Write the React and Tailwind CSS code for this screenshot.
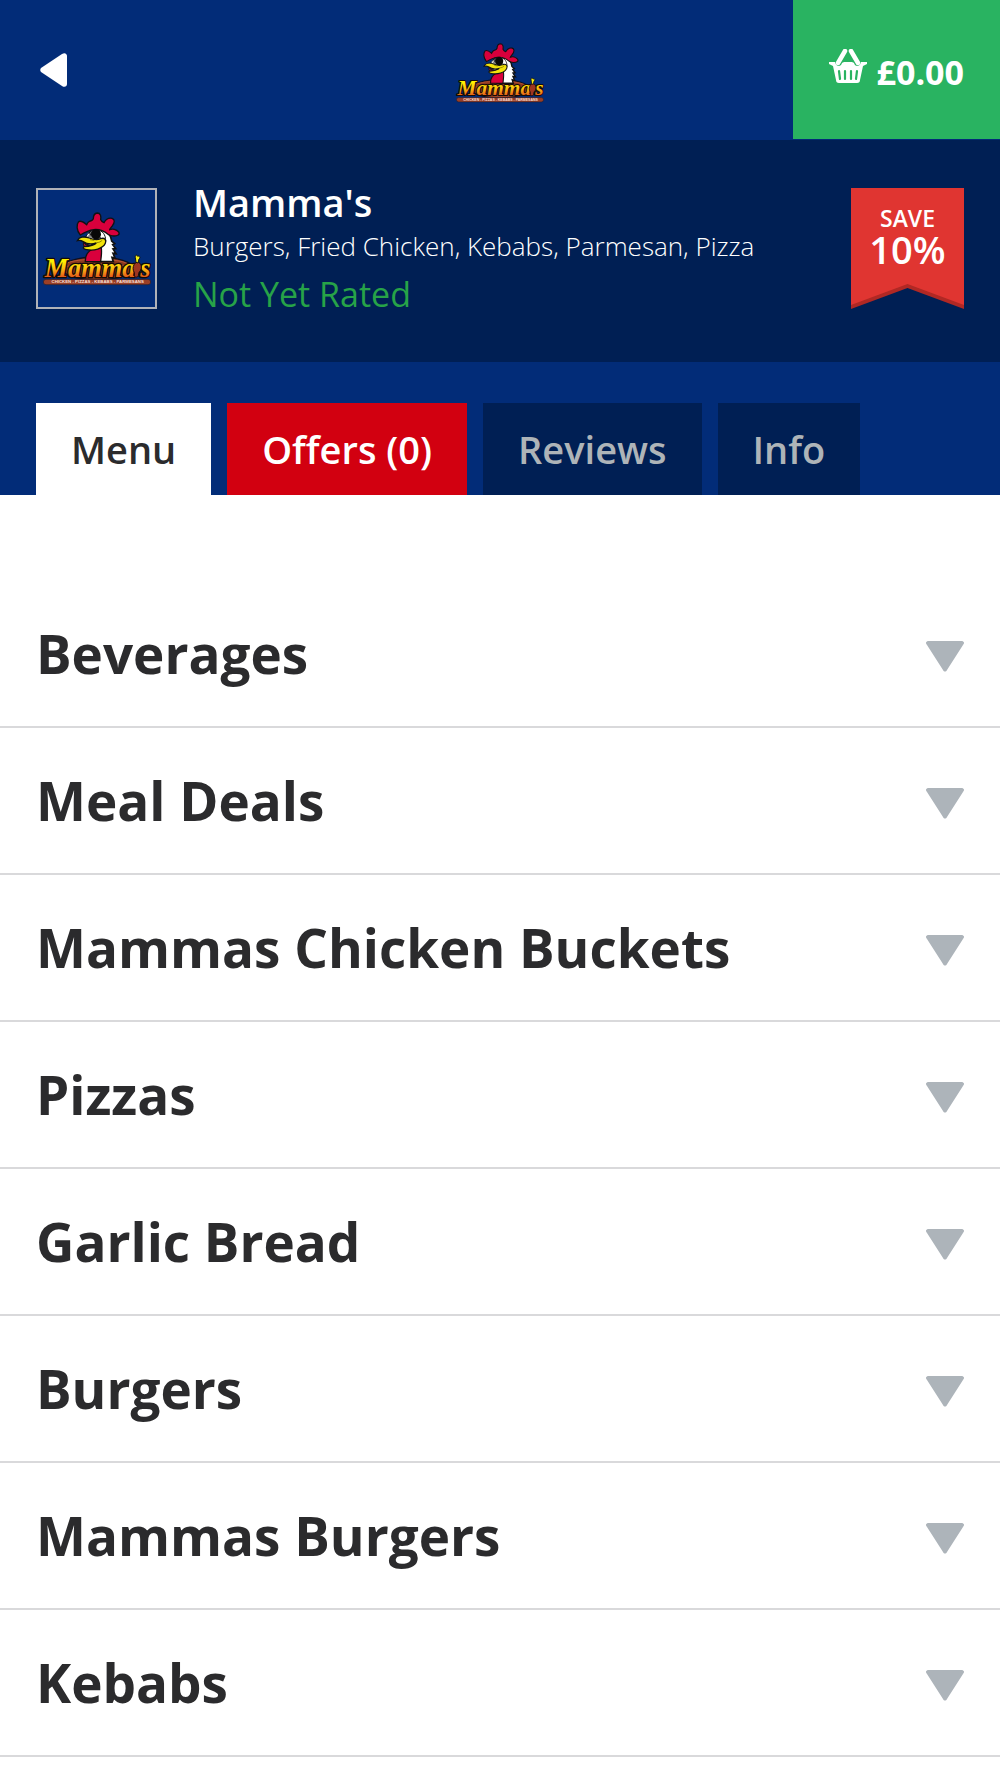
import React, { useId, useState } from 'react';

const categories = [
    'Beverages',
    'Meal Deals',
    'Mammas Chicken Buckets',
    'Pizzas',
    'Garlic Bread',
    'Burgers',
    'Mammas Burgers',
    'Kebabs',
];

const tabs = [
    { name: 'Menu', style: 'bg-white text-[#2b2b2d]' },
    { name: 'Offers (0)', style: 'bg-[#d20010] text-white' },
    { name: 'Reviews', style: 'bg-[#001f54] text-[#aeb4b8]' },
    { name: 'Info', style: 'bg-[#001f54] text-[#aeb4b8]' },
];

const Logo = ({ className }) => {
    const fill = useId();

    return (
        <svg viewBox="36 97 330 222" className={className} role="img" aria-label="Mamma's">
            <defs>
                <linearGradient id={fill} x1="0" y1="228" x2="0" y2="294" gradientUnits="userSpaceOnUse">
                    <stop offset="0.25" stopColor="#fff200" />
                    <stop offset="0.6" stopColor="#fbb812" />
                    <stop offset="1" stopColor="#e2501a" />
                </linearGradient>
            </defs>

            {/* Wooden sign */}
            <ellipse cx="202" cy="266" rx="108" ry="34" fill="#8a3820" stroke="#0a1024" strokeWidth="4" />
            <path d="M112 250c25-14 150-16 180 2M106 262c30-12 160-12 192 0M130 286c40 10 110 10 146 0" fill="none" stroke="#b95532" strokeWidth="3" />

            {/* Rooster */}
            <path d="M216 150c20 6 28 22 29 34l9 8-6 3 9 12-8 1 9 14-9-1 6 14-9-2 4 13h-60l4-44z" fill="#fff" stroke="#111" strokeWidth="5" />
            <path d="M166 246c-1-18 6-30 22-38l25-8c4 16 0 32-1 46z" fill="#d9003c" stroke="#111" strokeWidth="4" />
            <path d="M151 166c-12-14-12-32-5-40 8-5 18 4 24 9 2-5 4-8 8-10 9-2 11-4 12-8 0-9 4-16 12-17 9 0 12 9 10 20 3 6 6 8 10 9 5-9 14-15 24-13 9 3 9 13 0 24-5 6-7 8-7 10 8-4 20-1 27 7 5 8-4 12-14 12-8 0-13-3-18-5-12-10-26-16-43-14-16 2-30 10-40 16z" fill="#d9003c" stroke="#111" strokeWidth="4" />
            <path d="M166 176c5-17 20-26 36-25 16 2 25 14 25 32l-20 20-40-10z" fill="#fff" stroke="#111" strokeWidth="3" />
            <path d="M172 172c6-10 14-15 22-15l-8 18z" fill="#888" />
            <ellipse cx="198" cy="164" rx="15" ry="16" fill="#080808" />
            <path d="M181 151l5 12-9-6 6 11M181 176c10 6 24 5 31-4" fill="none" stroke="#111" strokeWidth="3" />
            <path d="M160 188c9 12 24 14 38 7l-24 14c-9-3-15-10-14-21z" fill="#b5102e" stroke="#111" strokeWidth="3" />
            <path d="M142 183c5-11 20-14 36-8 12 5 23 7 34 2 12-4 18 4 14 14-6 15-34 25-60 18-7-2-8-6-3-8 15-1 28-3 36-11-17 6-32 1-41-5-6-4-12-3-16-2z" fill="#f2e30b" stroke="#111" strokeWidth="4" />
            <path d="M180 180l13 2M199 189c8 0 14-3 18-8" fill="none" stroke="#8d8200" strokeWidth="3" />

            {/* Lettering */}
            <g
                fontFamily="Liberation Serif, serif"
                fontWeight="bold"
                fontStyle="italic"
                fill={`url(#${fill})`}
                stroke="#140a05"
                strokeWidth="8"
                strokeLinejoin="round"
                paintOrder="stroke"
            >
                <text x="44" y="291" fontSize="79">Mamma</text>
                <text x="331" y="291" fontSize="79">s</text>
            </g>
            <path d="M316 250c-6 6-8 14-6 22l3 7v9c2 6 10 6 12 0l2-10c6-5 9-15 6-22-3-8-11-11-17-6z" fill="#9e3520" stroke="#1a0906" strokeWidth="3" />
            <path d="M316 234c-2-8 6-10 7-4 7-3 9 5 4 8l-3 12-6-2z" fill="#f6ef15" stroke="#111" strokeWidth="3" />

            {/* Tagline */}
            <rect x="40" y="299" width="322" height="16" rx="8" fill="#9a3f27" stroke="#2a1c26" strokeWidth="2" />
            <text x="203" y="311" textAnchor="middle" fontFamily="Liberation Sans, sans-serif" fontWeight="bold" fontSize="13" fill="#f6dfd6">
                CHICKEN - PIZZAS - KEBABS - PARMESANS
            </text>
        </svg>
    );
};

const BasketIcon = () => (
    <svg viewBox="0 0 38 34" className="h-[34px] w-[38px]" fill="none" aria-hidden="true">
        <path d="M16 2 9 14M22 2l7 12" stroke="#fff" strokeWidth="4.500" strokeLinecap="round" />
        <path d="M0 13h6c1 5 6 5 7 1 1-1 2-1 3-1h6c1 0 2 0 3 1 1 4 6 4 7-1h6v2l-4 2-3 14c0 2-1 3-3 3H10c-2 0-3-1-3-3L4 17l-4-2z" fill="#fff" />
        <path d="m10 22 1 8M16 22v8M22 22v8M28 22l-1 8" stroke="#29b361" strokeWidth="2.200" strokeLinecap="round" />
    </svg>
);

const CategoryRow = ({ name }) => (
    <li className="border-b-2 border-[#d9d9db]">
        <button type="button" className="flex h-[145px] w-full items-center justify-between px-9">
            <span className="text-[53px] leading-[72px] font-bold">{name}</span>
            <svg viewBox="0 0 38 32" className="mt-1 h-8 w-[38px]" aria-hidden="true">
                <path d="M3 1h32c3 0 4 2 2 4L21 30c-1 2-3 2-4 0L1 5C-1 3 0 1 3 1z" fill="#adb4ba" />
            </svg>
        </button>
    </li>
);

const App = () => {
    const [active, setActive] = useState('Menu');

    return (
        <div className="min-h-screen bg-white font-['Open_Sans',sans-serif] text-[#2b2b2d]">
            {/* Top bar */}
            <header className="grid h-[140px] grid-cols-[1fr_auto_1fr] items-center bg-[#022c78]">
                <button type="button" aria-label="Back" className="ml-10 justify-self-start">
                    <svg viewBox="0 0 27 34" className="h-[34px] w-[27px]" aria-hidden="true">
                        <path d="M1 15 22 1c3-2 5 0 5 2v28c0 2-2 4-5 2L1 19c-1-1-1-3 0-4z" fill="#fff" />
                    </svg>
                </button>
                <Logo className="mt-1.5 h-[60px] w-[90px]" />
                <button type="button" className="mb-px flex h-[139px] items-center gap-2.5 justify-self-end bg-[#29b361] px-9 text-white">
                    <span className="pb-2">
                        <BasketIcon />
                    </span>
                    <span className="pt-1 text-[34px] leading-[46px] font-bold">£0.00</span>
                </button>
            </header>

            {/* Restaurant details */}
            <section className="flex items-start bg-[#001f54] px-9 pt-12 pb-11">
                <div className="flex size-[121px] items-center justify-center border-2 border-[#b0b2b8] bg-[#022c78]">
                    <Logo className="h-[74px] w-[110px]" />
                </div>
                <div className="-mt-[13px] ml-9 flex-1">
                    <h1 className="text-[38px] leading-[55px] font-semibold text-white">Mamma's</h1>
                    <p className="text-[26px] leading-8 font-light text-white">Burgers, Fried Chicken, Kebabs, Parmesan, Pizza</p>
                    <p className="mt-2 text-[34px] leading-[48px] text-[#27a348]">Not Yet Rated</p>
                </div>
                <div className="relative h-[121px] w-[113px] text-center text-white">
                    <svg viewBox="0 0 113 121" className="absolute inset-0 size-full" aria-hidden="true">
                        <path d="M0 0h113v121L56.500 100 0 121z" fill="#b02824" />
                        <path d="M0 0h113v117L56.500 96 0 117z" fill="#e03531" />
                    </svg>
                    <p className="relative pt-[18px] text-[23px] leading-6 font-semibold">SAVE</p>
                    <p className="relative text-[38px] leading-[38px] font-semibold">10%</p>
                </div>
            </section>

            {/* Tabs */}
            <nav className="flex gap-4 bg-[#022c78] px-9 pt-[41px]" role="tablist">
                {tabs.map((tab) => (
                    <button
                        key={tab.name}
                        type="button"
                        role="tab"
                        aria-selected={active === tab.name}
                        onClick={() => setActive(tab.name)}
                        className={`h-[92px] px-[35px] text-[38px] font-semibold ${tab.style}`}
                    >
                        {tab.name}
                    </button>
                ))}
            </nav>

            {/* Menu categories */}
            <ul className="pt-[86px]">
                {categories.map((name) => (
                    <CategoryRow key={name} name={name} />
                ))}
            </ul>
        </div>
    );
};

export default App;
